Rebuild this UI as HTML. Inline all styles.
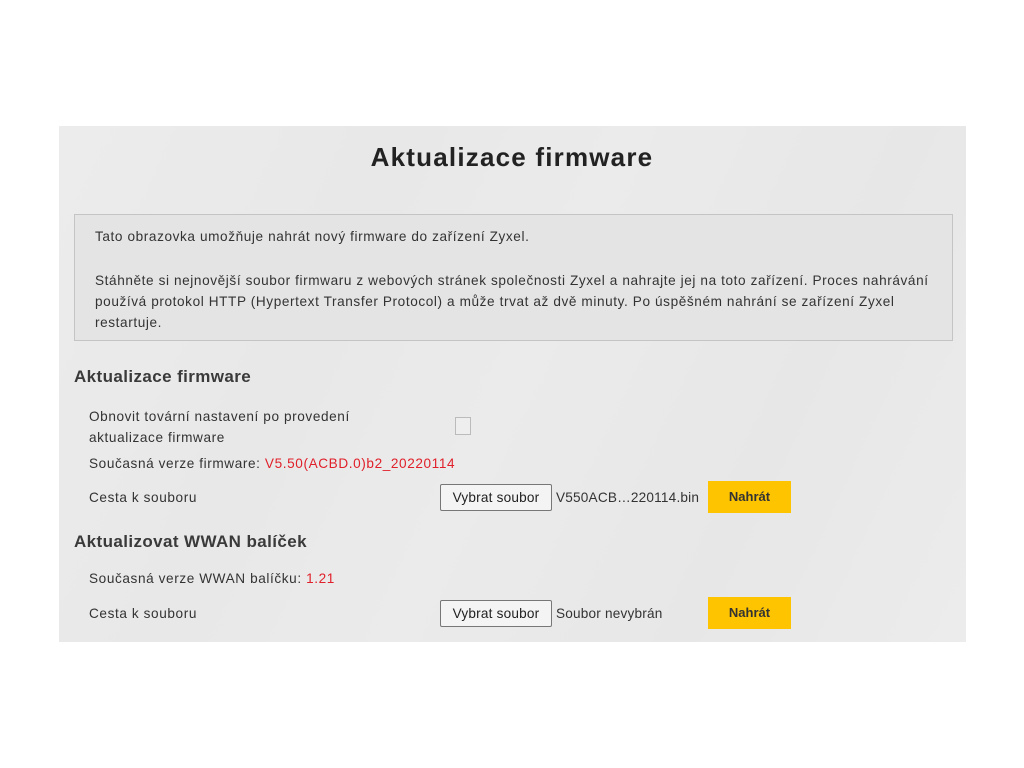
<!DOCTYPE html>
<html><head><meta charset="utf-8"><style>
body{margin:0;width:1024px;height:768px;background:#fff;font-family:"Liberation Sans",sans-serif;position:relative;overflow:hidden}
.panel{position:absolute;left:59px;top:126px;width:907px;height:516px;background:linear-gradient(115deg,#ececec 0%,#e8e8e8 30%,#ebebeb 50%,#e7e7e7 75%,#ececec 100%)}
.a{position:absolute;white-space:nowrap;color:#333}
.t{font-size:13.6px;letter-spacing:0.6px}
.h{font-size:17px;font-weight:bold;color:#3a3a3a;letter-spacing:0.4px}
.red{color:#e0202a}
.box{position:absolute;left:74px;top:214px;width:877px;height:125px;border:1px solid #c4c4c4;background:#e4e4e4}
.btn{position:absolute;width:112px;height:27px;border:1px solid #777;border-radius:2px;background:#f4f4f4;font-size:13.6px;color:#222;text-align:center;line-height:25px;box-sizing:border-box;letter-spacing:0.2px}
.y{position:absolute;width:83px;height:32px;background:#ffc400;font-size:13px;font-weight:bold;color:#333;text-align:center;line-height:32px}
</style></head><body>
<div class="panel"></div>
<div class="a" style="left:0;width:1024px;text-align:center;top:142px;font-size:26px;font-weight:bold;color:#222;letter-spacing:1.2px">Aktualizace firmware</div>
<div class="box"></div>
<div class="a t" style="left:95px;top:229px">Tato obrazovka umožňuje nahrát nový firmware do zařízení Zyxel.</div>
<div class="a t" style="left:95px;top:270px;line-height:21px">Stáhněte si nejnovější soubor firmwaru z webových stránek společnosti Zyxel a nahrajte jej na toto zařízení. Proces nahrávání<br>používá protokol HTTP (Hypertext Transfer Protocol) a může trvat až dvě minuty. Po úspěšném nahrání se zařízení Zyxel<br>restartuje.</div>
<div class="a h" style="left:74px;top:367px">Aktualizace firmware</div>
<div class="a t" style="left:89px;top:406px;line-height:21px">Obnovit tovární nastavení po provedení<br>aktualizace firmware</div>
<div style="position:absolute;left:455px;top:417px;width:14px;height:16px;border:1px solid #bbb;background:#eee"></div>
<div class="a t" style="left:89px;top:456px">Současná verze firmware: <span class="red">V5.50(ACBD.0)b2_20220114</span></div>
<div class="a t" style="left:89px;top:490px">Cesta k souboru</div>
<div class="btn" style="left:440px;top:484px">Vybrat soubor</div>
<div class="a t" style="left:556px;top:490px;letter-spacing:0.2px">V550ACB…220114.bin</div>
<div class="y" style="left:708px;top:481px">Nahrát</div>
<div class="a h" style="left:74px;top:532px">Aktualizovat WWAN balíček</div>
<div class="a t" style="left:89px;top:571px">Současná verze WWAN balíčku: <span class="red">1.21</span></div>
<div class="a t" style="left:89px;top:606px">Cesta k souboru</div>
<div class="btn" style="left:440px;top:600px">Vybrat soubor</div>
<div class="a t" style="left:556px;top:606px;letter-spacing:0.2px">Soubor nevybrán</div>
<div class="y" style="left:708px;top:597px">Nahrát</div>
</body></html>
